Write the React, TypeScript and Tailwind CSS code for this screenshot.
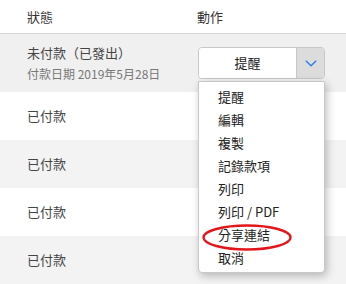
import React from "react";

const font = { fontFamily: '"Noto Sans CJK TC", "Noto Sans", sans-serif' };

const items = ["提醒", "編輯", "複製", "記錄款項", "列印", "列印 / PDF", "分享連結", "取消"];

export default function App() {
  return (
    <div className="relative w-[346px] h-[284px] overflow-hidden bg-white text-[13px]" style={font}>
      <div className="flex h-[34px] items-center border-b border-[#d4d4d4] text-[#333] pt-[1px]">
        <div className="w-[197px] pl-[27px]">狀態</div>
        <div>動作</div>
      </div>
      <div className="flex h-[58px] bg-[#f0f0f0]">
        <div className="w-[198px] pl-[27px] pt-[8px] leading-[21px]">
          <div className="text-[#444]">未付款（已發出）</div>
          <div className="text-[#777] text-[12px]">付款日期 2019年5月28日</div>
        </div>
        <div className="pt-[13px]">
          <div className="flex h-[32px] w-[127px] rounded-[4px] border border-[#c8c8c8] overflow-hidden">
            <div className="flex w-[98px] items-center justify-center bg-white text-[#222] border-r border-[#c8c8c8]">提醒</div>
            <div className="flex flex-1 items-center justify-center bg-[#dcdcdc]">
              <svg width="12" height="7" viewBox="0 0 12 7">
                <path d="M0.8 0.8 L6 5.8 L11.2 0.8" fill="none" stroke="#2b7de9" strokeWidth="1.3" />
              </svg>
            </div>
          </div>
        </div>
      </div>
      {[0, 1, 2, 3].map((i) => (
        <div key={i} className={`flex h-[48px] items-center pl-[27px] text-[#444] ${i % 2 === 0 ? "bg-white" : "bg-[#f3f3f3]"}`}>
          已付款
        </div>
      ))}
      <div className="absolute left-[198px] top-[81px] w-[127px] h-[192px] rounded-b-[4px] border border-[#c8c8c8] bg-white pt-[3px] pb-[5px] shadow-[2px_3px_8px_rgba(0,0,0,0.25)]">
        {items.map((t) => (
          <div key={t} className="flex h-[23px] items-center pl-[19px] text-[#222]">
            {t}
          </div>
        ))}
      </div>
      <svg className="absolute left-[200px] top-[222px]" width="96" height="32" viewBox="0 0 96 32">
        <ellipse cx="47" cy="15.5" rx="43.5" ry="12" fill="none" stroke="#e3171b" strokeWidth="2.4" />
      </svg>
    </div>
  );
}
